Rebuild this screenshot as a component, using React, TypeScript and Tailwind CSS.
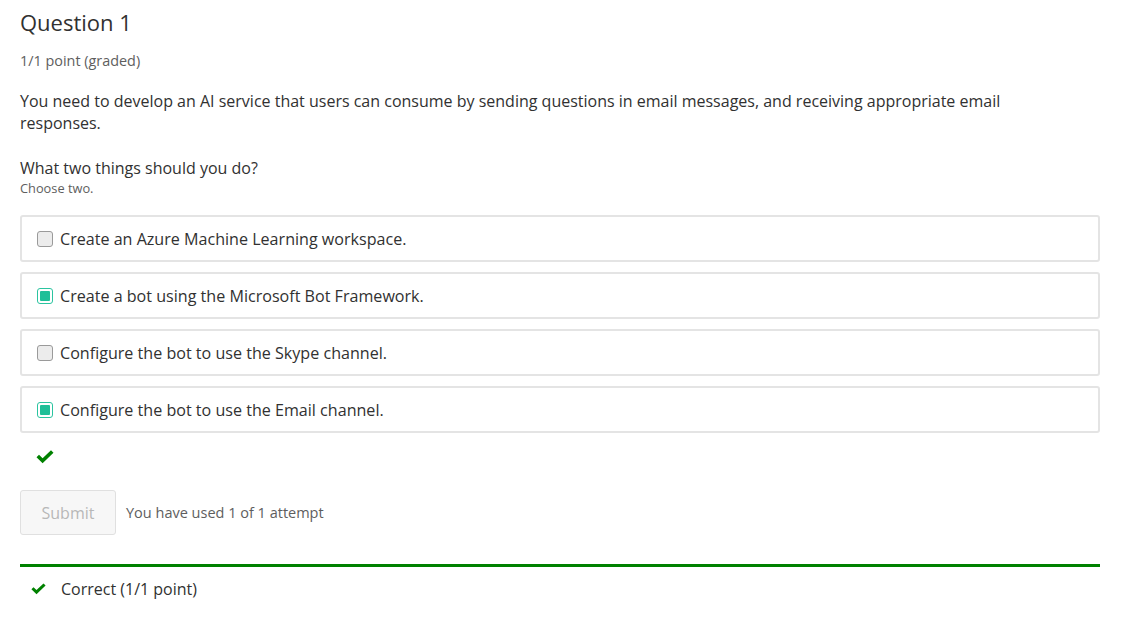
const options = [
  { label: 'Create an Azure Machine Learning workspace.', checked: false },
  { label: 'Create a bot using the Microsoft Bot Framework.', checked: true },
  { label: 'Configure the bot to use the Skype channel.', checked: false },
  { label: 'Configure the bot to use the Email channel.', checked: true },
];

function CheckMark({ className }: { className?: string }) {
  return (
    <svg viewBox="0 0 18 14" className={className} fill="#008100">
      <path d="M0.5 7.2 L3 4.8 L6.6 8.3 L15 0.3 L17.5 2.8 L6.6 13.3 Z" />
    </svg>
  );
}

export default function App() {
  return (
    <div className="min-h-screen bg-white px-5 text-[#313131]" style={{ fontFamily: '"Open Sans", "Noto Sans", sans-serif' }}>
      <h3 className="pt-[7px] text-[22px] font-normal leading-[30px] text-[#313131]">Question 1</h3>
      <div className="mt-[14px] text-[14.4px] leading-5 text-[#5e5e5e]">1/1 point (graded)</div>

      <p className="mt-[19px] max-w-[1040px] text-base leading-[22px]">
        You need to develop an AI service that users can consume by sending questions in email messages, and receiving appropriate email
        responses.
      </p>

      <p className="mt-[23px] text-base leading-[22px]">What two things should you do?</p>
      <div className="mt-[1px] text-[12.8px] leading-4 text-[#5e5e5e]">Choose two.</div>

      <div className="mt-[19px] flex w-[1080px] flex-col gap-[10px]">
        {options.map((o) => (
          <label key={o.label} className="flex h-[47px] items-center rounded-[3px] border-2 border-[#e4e4e4] pl-[15px]">
            {o.checked ? (
              <span className="flex h-4 w-4 items-center justify-center rounded-[3px] border border-[#2bc4a0] bg-white">
                <span className="h-[10px] w-[10px] rounded-[1px] bg-[#1fbf98]" />
              </span>
            ) : (
              <span className="h-4 w-4 rounded-[3px] border border-[#9a9a9a] bg-[#ececec]" />
            )}
            <span className="ml-[7px] text-[16.1px] leading-[22px] text-[#313131]">{o.label}</span>
          </label>
        ))}
      </div>

      <div className="mt-[17px] pl-[16px]">
        <CheckMark className="h-[14px] w-[18px]" />
      </div>

      <div className="mt-[26px] flex items-center">
        <button disabled className="h-[45px] w-24 rounded-[3px] border border-[#e0e0e0] bg-[#f7f7f7] text-base text-[#b8b8b8]">
          Submit
        </button>
        <span className="ml-[10px] text-[14.5px] text-[#5e5e5e]">You have used 1 of 1 attempt</span>
      </div>

      <div className="mt-[29px] w-[1080px] border-t-[3px] border-[#008100]">
        <div className="flex items-center pt-[11px]">
          <CheckMark className="ml-[11px] h-[12px] w-[15px]" />
          <span className="ml-[15px] text-base leading-[22px] text-[#313131]">Correct (1/1 point)</span>
        </div>
      </div>
    </div>
  );
}
